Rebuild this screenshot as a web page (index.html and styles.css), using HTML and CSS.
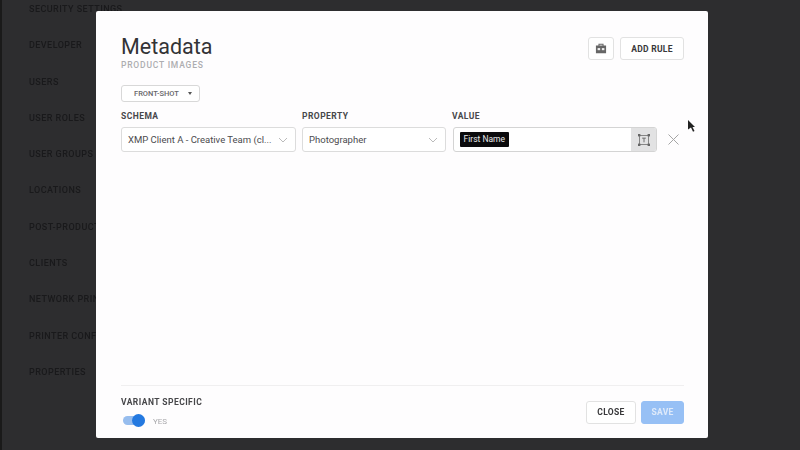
FILE: index.html
```html
<!DOCTYPE html>
<html lang="en">
<head>
<meta charset="utf-8">
<title>Metadata</title>
<link rel="stylesheet" href="styles.css">
</head>
<body>
<nav class="sidebar">
  <a>SECURITY SETTINGS</a>
  <a>DEVELOPER</a>
  <a>USERS</a>
  <a>USER ROLES</a>
  <a>USER GROUPS</a>
  <a>LOCATIONS</a>
  <a>POST-PRODUCTION</a>
  <a>CLIENTS</a>
  <a>NETWORK PRINTERS</a>
  <a>PRINTER CONFIG</a>
  <a>PROPERTIES</a>
</nav>
<div class="modal">
  <header class="head">
    <div>
      <h1 class="title">Metadata</h1>
      <div class="subtitle">PRODUCT IMAGES</div>
    </div>
    <div class="actions">
      <button class="btn icon-btn" aria-label="Toolkit">
        <svg width="12" height="11" viewBox="0 0 14 13"><path fill="#666" d="M4 3V1h6v2h3v9H1V3h3zm1.200 0h3.600V2.200H5.200V3z"/><rect x="3" y="6" width="3" height="2.500" fill="#eee"/><rect x="8" y="6" width="3" height="2.500" fill="#eee"/></svg>
      </button>
      <button class="btn add">ADD RULE</button>
    </div>
  </header>
  <button class="variant">FRONT-SHOT<span class="caret"></span></button>
  <div class="row">
    <div class="field schema">
      <label>SCHEMA</label>
      <div class="select"><span class="sel-text">XMP Client A - Creative Team (cl...</span><svg class="chev" width="10" height="6" viewBox="0 0 10 6"><path d="M1 1l4 4 4-4" fill="none" stroke="#bbb" stroke-width="1"/></svg></div>
    </div>
    <div class="field property">
      <label>PROPERTY</label>
      <div class="select"><span class="sel-text">Photographer</span><svg class="chev" width="10" height="6" viewBox="0 0 10 6"><path d="M1 1l4 4 4-4" fill="none" stroke="#bbb" stroke-width="1"/></svg></div>
    </div>
    <div class="field value">
      <label>VALUE</label>
      <div class="value-box">
        <div class="value-main"><span class="tag">First Name</span></div>
        <div class="value-btn">
          <svg width="12" height="12" viewBox="0 0 13 13" fill="none" stroke="#666"><rect x="1.500" y="1.500" width="10" height="10" stroke-width=".8"/><path d="M4.500 4.500h4M6.500 4.500v4.500" stroke-width="1"/><g fill="#666" stroke="none"><rect width="2.600" height="2.600"/><rect x="10.400" width="2.600" height="2.600"/><rect y="10.400" width="2.600" height="2.600"/><rect x="10.400" y="10.400" width="2.600" height="2.600"/></g></svg>
        </div>
      </div>
    </div>
    <svg class="remove" width="11" height="11" viewBox="0 0 11 11"><path d="M.5.500l10 10M10.500.500l-10 10" stroke="#a5a5a5" stroke-width="1"/></svg>
  </div>
  <footer class="foot">
    <div>
      <div class="foot-label">VARIANT SPECIFIC</div>
      <div class="toggle-row">
        <span class="toggle"><span class="knob"></span></span>
        <span class="yes">YES</span>
      </div>
    </div>
    <div class="foot-actions">
      <button class="btn close">CLOSE</button>
      <button class="btn save">SAVE</button>
    </div>
  </footer>
</div>
<svg class="cursor" width="8" height="12" viewBox="0 0 8 12"><path d="M0 0l7 7H4.500l2 4-1.500.800-2-4.300L0 9.500z" fill="#222"/></svg>
</body>
</html>
```

FILE: styles.css
```css
* { box-sizing: border-box; }
html, body { height: 100%; }
body {
  margin: 0;
  width: 800px;
  height: 450px;
  overflow: hidden;
  background: #2d2d2f;
  border-left: 2px solid #1a1a1a;
  font-family: Roboto, "Liberation Sans", sans-serif;
  position: relative;
  filter: blur(.3px);
}
.sidebar {
  display: flex;
  flex-direction: column;
  gap: 23.300px;
  padding: 3px 0 0 27px;
}
.sidebar a {
  font-size: 9px;
  line-height: 13px;
  font-weight: 500;
  letter-spacing: .45px;
  color: #19191b;
  white-space: nowrap;
}
.modal {
  position: absolute;
  left: 94px;
  top: 11px;
  width: 612px;
  height: 427px;
  background: #fefdfe;
  border-radius: 2px;
  padding: 23px 24px 0 25px;
  display: flex;
  flex-direction: column;
  align-items: flex-start;
}
.head {
  width: 100%;
  display: flex;
  justify-content: space-between;
  align-items: flex-start;
}
.title {
  margin: 0;
  font-size: 21.500px;
  line-height: 26px;
  font-weight: 400;
  color: #333336;
}
.subtitle {
  font-size: 8.500px;
  line-height: 11px;
  font-weight: 500;
  letter-spacing: .8px;
  color: #adadb0;
}
.actions { display: flex; gap: 6px; margin-top: 3px; }
.btn {
  font-family: inherit;
  background: #fff;
  border: 1px solid #e2e2e2;
  border-radius: 3px;
  padding: 0;
  display: flex;
  align-items: center;
  justify-content: center;
  font-weight: 700;
  color: #38383a;
}
.icon-btn { width: 26px; height: 23px; }
.add { width: 64px; height: 23px; font-size: 8.500px; letter-spacing: .3px; }
.variant {
  margin-top: 14px;
  width: 79px;
  height: 17px;
  background: #fff;
  border: 1px solid #d8d8d8;
  border-radius: 3px;
  padding: 0 0 0 12px;
  font-family: inherit;
  font-size: 7.500px;
  font-weight: 500;
  color: #66666a;
  display: flex;
  align-items: center;
}
.caret {
  margin-left: 9px;
  width: 0;
  height: 0;
  border-left: 2.500px solid transparent;
  border-right: 2.500px solid transparent;
  border-top: 3px solid #555;
}
.row {
  margin-top: 9px;
  display: flex;
  gap: 6px;
  align-items: flex-end;
}
.field label {
  display: block;
  font-size: 8.500px;
  line-height: 11px;
  font-weight: 700;
  letter-spacing: .45px;
  color: #47474a;
  margin-bottom: 5px;
}
.schema { width: 175px; }
.property { width: 144px; }
.value { width: 205px; margin-left: 0; }
.value label { margin-left: 0; }
.select {
  height: 25px;
  border: 1px solid #dcdcdc;
  border-radius: 3px;
  background: #fff;
  display: flex;
  align-items: center;
  justify-content: space-between;
  padding: 0 7px 0 6px;
  font-size: 9.500px;
  color: #4b4b4e;
}
.sel-text { white-space: nowrap; }
.chev { flex: none; }
.value-box {
  height: 25px;
  margin-left: 1px;
  border: 1px solid #d4d4d4;
  border-radius: 3px;
  display: flex;
  background: #fff;
  overflow: hidden;
}
.value-main {
  flex: 1;
  padding-left: 6px;
  display: flex;
  align-items: center;
}
.tag {
  background: #0a0a0c;
  color: #e8e8e8;
  font-size: 8.500px;
  line-height: 15px;
  height: 15px;
  padding: 0 3.500px;
  border-radius: 1px;
}
.value-btn {
  width: 25px;
  background: #e2e2e3;
  display: flex;
  align-items: center;
  justify-content: center;
}
.remove { margin: 0 0 7px 5px; flex: none; }
.foot {
  margin-top: auto;
  width: 100%;
  height: 53px;
  border-top: 1px solid #f0eff0;
  display: flex;
  justify-content: space-between;
  align-items: flex-start;
}
.foot-label {
  margin-top: 11px;
  font-size: 8.500px;
  line-height: 11px;
  font-weight: 700;
  letter-spacing: .45px;
  color: #47474a;
}
.toggle-row {
  margin-top: 7px;
  display: flex;
  align-items: center;
  gap: 8px;
  padding-left: 2px;
}
.toggle {
  width: 22px;
  height: 9px;
  background: #97bdee;
  border-radius: 5px;
  position: relative;
  display: block;
}
.knob {
  position: absolute;
  right: 0;
  top: -2px;
  width: 13px;
  height: 13px;
  border-radius: 50%;
  background: #2479e0;
}
.yes { font-size: 8px; color: #a9a9ac; margin-top: 2px; }
.foot-actions { display: flex; gap: 5px; margin-top: 14.500px; }
.close { width: 50px; height: 23px; font-size: 8.500px; letter-spacing: .3px; }
.save {
  width: 43px;
  height: 23px;
  font-size: 8.500px;
  letter-spacing: .3px;
  background: #97c0f5;
  border-color: #97c0f5;
  color: #dfeafa;
}
.cursor { position: absolute; left: 686px; top: 120px; }
```
